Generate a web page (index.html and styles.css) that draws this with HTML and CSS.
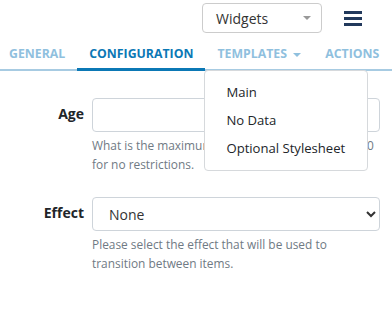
FILE: index.html
```html
<!DOCTYPE html>
<html lang="en">
<head>
    <meta charset="UTF-8">
    <meta name="viewport" content="width=device-width, initial-scale=1.0">
    <title>Widget settings</title>
    <link rel="stylesheet" href="styles.css">
</head>
<body>
    <div class="topbar">
        <div class="widget-select">
            <span>Widgets</span>
            <span class="caret-gray"></span>
        </div>
        <div class="burger">
            <span></span><span></span><span></span>
        </div>
    </div>

    <nav class="tabs">
        <a class="tab">General</a>
        <a class="tab active">Configuration</a>
        <div class="tab-drop">
            <a class="tab">Templates <span class="caret"></span></a>
            <div class="menu">
                <div class="menu-item">Main</div>
                <div class="menu-item">No Data</div>
                <div class="menu-item">Optional Stylesheet</div>
            </div>
        </div>
        <a class="tab">Actions</a>
    </nav>

    <form class="form">
        <div class="row">
            <label class="label">Age</label>
            <div class="field">
                <input class="input" type="text">
                <p class="help">What is the maximum age of items in days? Enter 0 for no restrictions.</p>
            </div>
        </div>
        <div class="row">
            <label class="label">Effect</label>
            <div class="field">
                <select class="input select">
                    <option>None</option>
                </select>
                <p class="help">Please select the effect that will be used to transition between items.</p>
            </div>
        </div>
    </form>
</body>
</html>
```

FILE: styles.css
```css
body {
    margin: 0;
    font-family: "Open Sans", sans-serif;
    color: #212529;
    background: #fff;
    width: 392px;
    overflow: hidden;
}
.topbar {
    display: flex;
    align-items: center;
    justify-content: flex-end;
    height: 36px;
    padding: 0 30px 0 0;
    gap: 22px;
}
.widget-select {
    display: flex;
    align-items: center;
    justify-content: space-between;
    box-sizing: border-box;
    width: 120px;
    height: 30px;
    padding: 0 10px 0 13px;
    border: 1px solid #ccc;
    border-radius: 4px;
    font-size: 14px;
    color: #333;
}
.caret-gray {
    width: 0;
    height: 0;
    border-left: 4px solid transparent;
    border-right: 4px solid transparent;
    border-top: 4px solid #999;
}
.burger {
    display: flex;
    flex-direction: column;
    gap: 3px;
    width: 18px;
}
.burger span {
    height: 3px;
    background: #22395c;
}
.tabs {
    display: flex;
    margin-top: 3px;
    margin-left: -3px;
    border-bottom: 2px solid #a7cbe2;
    height: 30px;
}
.tab {
    display: block;
    padding: 0 12px;
    height: 30px;
    line-height: 30px;
    font-size: 12.3px;
    font-weight: 700;
    text-transform: uppercase;
    color: #8fc0de;
    white-space: nowrap;
}
.tab.active {
    color: #0b78b5;
    border-bottom: 3px solid #0b78b5;
    margin-bottom: -2px;
    height: 29px;
}
.caret {
    display: inline-block;
    vertical-align: middle;
    margin-left: 3px;
    border-left: 4px solid transparent;
    border-right: 4px solid transparent;
    border-top: 4px solid #8fc0de;
}
.tab-drop {
    position: relative;
}
.menu {
    position: absolute;
    top: 31px;
    left: -1px;
    width: 164px;
    box-sizing: border-box;
    padding: 7px 0 8px;
    background: #fff;
    border: 1px solid #d6d9dc;
    border-radius: 4px;
    z-index: 2;
}
.menu-item {
    padding: 0 21px;
    line-height: 28px;
    font-size: 13.1px;
    color: #212529;
    white-space: nowrap;
}
.form {
    padding: 27px 12px 0 0;
}
.row {
    display: flex;
    margin-bottom: 23px;
}
.label {
    width: 84px;
    text-align: right;
    padding-right: 8px;
    font-size: 14px;
    font-weight: 700;
    line-height: 32px;
}
.field {
    flex: 1;
}
.input {
    display: block;
    box-sizing: border-box;
    width: 100%;
    height: 34px;
    border: 1px solid #ced4da;
    border-radius: 4px;
    font-family: inherit;
    font-size: 14px;
    color: #333;
    background: #fff;
}
.select {
    padding-left: 12px;
}
.help {
    margin: 4px 0 0;
    font-size: 11.9px;
    line-height: 19px;
    color: #707a84;
}
```
